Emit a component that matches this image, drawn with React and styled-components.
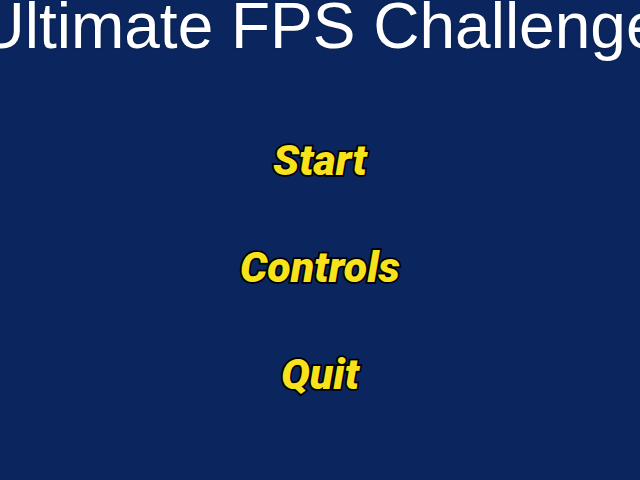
import React from 'react'
import styled, { createGlobalStyle } from 'styled-components'

const GlobalStyle = createGlobalStyle`
  html, body {
    margin: 0;
    padding: 0;
    background: #0b265e;
  }
`

const Screen = styled.div`
  width: 640px;
  height: 480px;
  overflow: hidden;
  background: #0b265e;
  display: flex;
  flex-direction: column;
  align-items: center;
`

const Title = styled.h1`
  margin: -6px 0 0;
  font-family: "Liberation Sans", Arial, sans-serif;
  font-weight: 400;
  font-size: 64px;
  line-height: 64px;
  color: #ffffff;
  white-space: nowrap;
  text-shadow: 0 0 2px rgba(0, 0, 0, 0.35);
`

const Menu = styled.nav`
  margin-top: 81px;
  display: flex;
  flex-direction: column;
  align-items: center;
  gap: 65px;
`

const MenuItem = styled.button`
  background: none;
  border: 0;
  padding: 0;
  cursor: pointer;
  font-family: Roboto, "Noto Sans", sans-serif;
  font-weight: 900;
  font-style: italic;
  font-size: 43px;
  line-height: 42px;
  color: #f8e21b;
  -webkit-text-stroke: 3.5px #000;
  paint-order: stroke fill;
`

export default function App() {
  return (
    <>
      <GlobalStyle />
      <Screen>
        <Title>Ultimate FPS Challenge</Title>
        <Menu>
          <MenuItem>Start</MenuItem>
          <MenuItem>Controls</MenuItem>
          <MenuItem>Quit</MenuItem>
        </Menu>
      </Screen>
    </>
  )
}
